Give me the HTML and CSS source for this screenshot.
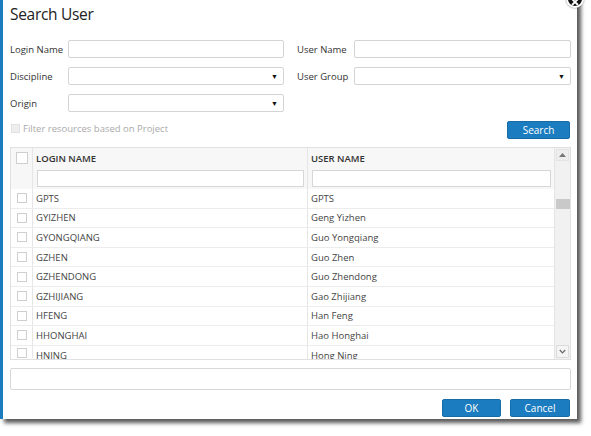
FILE: index.html
```html
<!DOCTYPE html>
<html>
<head>
<meta charset="utf-8">
<link rel="stylesheet" href="styles.css">
</head>
<body>
<div class="dialog">
  <span class="close"><svg width="8" height="8" viewBox="0 0 8 8"><path d="M1 1L7 7M7 1L1 7" stroke="#fff" stroke-width="1.8"/></svg></span>
  <h1 class="title">Search User</h1>
  <div class="form">
    <div class="field"><span class="label">Login Name</span><span class="input"></span></div>
    <div class="field"><span class="label">User Name</span><span class="input"></span></div>
    <div class="field"><span class="label">Discipline</span><span class="input select"><span class="arrow">▼</span></span></div>
    <div class="field"><span class="label">User Group</span><span class="input select"><span class="arrow">▼</span></span></div>
    <div class="field"><span class="label">Origin</span><span class="input select"><span class="arrow">▼</span></span></div>
  </div>
  <div class="toolbar">
    <label class="filter"><span class="cb cb-disabled"></span>Filter resources based on Project</label>
    <button class="btn btn-search">Search</button>
  </div>
  <div class="grid">
    <div class="grid-main">
      <div class="row head">
        <div class="cell c-check"><span class="cb cb-head"></span></div>
        <div class="cell c-login">LOGIN NAME</div>
        <div class="cell c-user">USER NAME</div>
      </div>
      <div class="row filters">
        <div class="cell c-check"></div>
        <div class="cell c-login"><span class="finput"></span></div>
        <div class="cell c-user"><span class="finput"></span></div>
      </div>
      <div class="body">
        <div class="row data"><div class="cell c-check"><span class="cb"></span></div><div class="cell c-login">GPTS</div><div class="cell c-user">GPTS</div></div>
        <div class="row data"><div class="cell c-check"><span class="cb"></span></div><div class="cell c-login">GYIZHEN</div><div class="cell c-user">Geng Yizhen</div></div>
        <div class="row data"><div class="cell c-check"><span class="cb"></span></div><div class="cell c-login">GYONGQIANG</div><div class="cell c-user">Guo Yongqiang</div></div>
        <div class="row data"><div class="cell c-check"><span class="cb"></span></div><div class="cell c-login">GZHEN</div><div class="cell c-user">Guo Zhen</div></div>
        <div class="row data"><div class="cell c-check"><span class="cb"></span></div><div class="cell c-login">GZHENDONG</div><div class="cell c-user">Guo Zhendong</div></div>
        <div class="row data"><div class="cell c-check"><span class="cb"></span></div><div class="cell c-login">GZHIJIANG</div><div class="cell c-user">Gao Zhijiang</div></div>
        <div class="row data"><div class="cell c-check"><span class="cb"></span></div><div class="cell c-login">HFENG</div><div class="cell c-user">Han Feng</div></div>
        <div class="row data"><div class="cell c-check"><span class="cb"></span></div><div class="cell c-login">HHONGHAI</div><div class="cell c-user">Hao Honghai</div></div>
        <div class="row data last"><div class="cell c-check"><span class="cb"></span></div><div class="cell c-login">HNING</div><div class="cell c-user">Hong Ning</div></div>
      </div>
    </div>
    <div class="scrollbar">
      <span class="sb-btn sb-up"><svg width="7" height="4" viewBox="0 0 7 4"><path d="M0 4L3.5 0L7 4Z" fill="#777"/></svg></span>
      <span class="sb-thumb"></span>
      <span class="sb-space"></span>
      <span class="sb-btn sb-down"><svg width="7" height="5" viewBox="0 0 7 5"><path d="M0.8 1L3.5 3.8L6.2 1" fill="none" stroke="#666" stroke-width="1.2"/></svg></span>
    </div>
  </div>
  <div class="notes"></div>
  <div class="footer">
    <button class="btn btn-ok">OK</button>
    <button class="btn btn-cancel">Cancel</button>
  </div>
</div>
</body>
</html>
```

FILE: styles.css
```css
* { box-sizing: border-box; }
html, body { margin: 0; padding: 0; background: #fff; }
body {
  font-family: "Open Sans", "Liberation Sans", sans-serif;
  color: #333;
  width: 591px;
  height: 436px;
  overflow: hidden;
}
.dialog {
  position: relative;
  width: 577px;
  height: 419px;
  background: #fff;
  border-left: 3px solid #1b7cc0;
  padding: 3px 6px 0 7px;
  box-shadow: 4px 4px 4px rgba(0, 0, 0, 0.65);
}
.close {
  position: absolute;
  top: -10px;
  right: -7px;
  width: 18px;
  height: 18px;
  border-radius: 50%;
  background: #111;
  border: 2px solid #fff;
  box-shadow: 0 0 2px rgba(0,0,0,0.6);
  display: flex;
  align-items: center;
  justify-content: center;
}
.close svg { margin-top: 5px; }
.title {
  margin: 0;
  font-size: 15.5px;
  letter-spacing: -0.3px;
  line-height: 22px;
  font-weight: 400;
  color: #222;
  padding-left: 0;
}
.form {
  margin-top: 15px;
  display: grid;
  grid-template-columns: 274px 274px;
  column-gap: 13px;
  row-gap: 9px;
}
.field {
  display: flex;
  align-items: center;
  height: 18px;
}
.label {
  width: 58px;
  flex: none;
  font-size: 9.5px;
  color: #333;
}
.field:nth-child(even) .label { width: 57px; }
.input {
  flex: 1;
  height: 18px;
  border: 1px solid #d4d4d4;
  border-radius: 2px;
  background: #fff;
  display: flex;
  align-items: center;
  justify-content: flex-end;
  padding-right: 5px;
}
.arrow {
  font-size: 7px;
  color: #111;
  line-height: 1;
}
.toolbar {
  margin-top: 9px;
  height: 18px;
  display: flex;
  align-items: center;
  justify-content: space-between;
}
.filter {
  display: flex;
  align-items: center;
  font-size: 9.5px;
  color: #aaa;
  margin-top: -3px;
}
.cb {
  display: inline-block;
  width: 10px;
  height: 10px;
  border: 1px solid #cfcfcf;
  background: #fff;
}
.cb-disabled {
  width: 9px;
  height: 9px;
  background: #eee;
  border-color: #e2e2e2;
  margin: 0 3px 0 1px;
}
.btn {
  font-family: "Open Sans", "Liberation Sans", sans-serif;
  font-size: 10px;
  color: #fff;
  background: #1b7cc0;
  border: 1px solid #176ca8;
  border-radius: 2px;
  height: 18px;
  padding: 0;
  line-height: 16px;
}
.btn-search { width: 63px; margin-right: 1px; }
.grid {
  margin-top: 8px;
  height: 213px;
  border: 1px solid #e0e0e0;
  display: flex;
  width: 561px;
}
.grid-main {
  flex: 1;
  display: flex;
  flex-direction: column;
  overflow: hidden;
}
.row {
  display: grid;
  grid-template-columns: 22px 275px 1fr;
}
.cell {
  border-right: 1px solid #e6e6e6;
  display: flex;
  align-items: center;
  font-size: 9.5px;
  color: #444;
  padding-left: 3px;
  overflow: hidden;
  white-space: nowrap;
}
.cell.c-user { border-right: none; padding-left: 3px; }
.cell.c-check { padding-left: 5px; }
.head { height: 20px; background: #f7f7f7; }
.head .cell { font-weight: 600; color: #333; font-size: 9.5px; }
.cb-head { width: 12px; height: 12px; }
.filters { height: 21px; background: #f7f7f7; }
.filters .cell { padding: 2px 3px 1px 4px; align-items: flex-start; }
.filters .c-login { padding-right: 3px; }
.finput {
  display: block;
  width: 100%;
  height: 17px;
  border: 1px solid #d6d6d6;
  background: #fff;
}
.filters .c-user .finput { width: 240px; }
.body { flex: 1; overflow: hidden; }
.data { height: 19.6px; border-bottom: 1px solid #ececec; }
.data.last { height: 15px; border-bottom: none; align-items: start; }
.data.last .cell { align-items: flex-start; line-height: 15px; padding-top: 2px; }
.data .c-check { padding-left: 6px; }
.data .c-login { padding-left: 3px; }
.scrollbar {
  width: 16px;
  flex: none;
  background: #f1f1f1;
  border-left: 1px solid #e4e4e4;
  display: flex;
  flex-direction: column;
  align-items: center;
}
.sb-btn {
  width: 13px;
  height: 12px;
  display: flex;
  align-items: center;
  justify-content: center;
}
.sb-up { margin-top: 1px; background: #eee; border: 1px solid #e4e4e4; }
.sb-thumb {
  margin-top: 38px;
  width: 14px;
  height: 10px;
  background: #c9c9c9;
}
.sb-space { flex: 1; }
.sb-down { margin-bottom: 1px; height: 13px; background: #f4f4f4; border: 1px solid #dcdcdc; }
.notes {
  margin-top: 8px;
  height: 22px;
  width: 561px;
  border: 1px solid #d8d8d8;
  border-radius: 2px;
}
.footer {
  margin-top: 9px;
  display: flex;
  justify-content: flex-end;
  gap: 9px;
  padding-right: 1px;
}
.btn-ok { width: 59px; }
.btn-cancel { width: 60px; }
```
